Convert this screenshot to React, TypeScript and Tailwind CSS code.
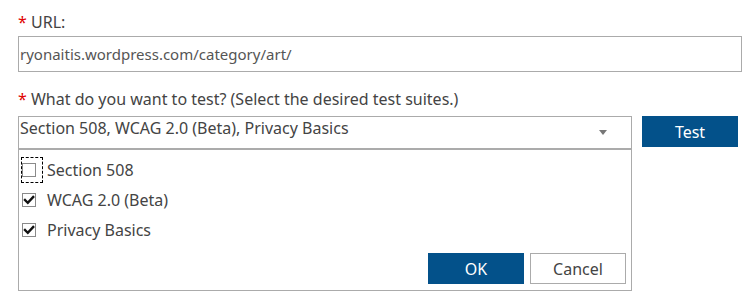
import React from "react";

function Check({ checked }: { checked: boolean }) {
  return (
    <span className="block w-[14px] h-[14px] border border-[#8a8a8a] bg-white relative">
      {checked && (
        <svg viewBox="0 0 14 14" className="absolute left-[-1px] top-[-1px] w-[14px] h-[14px]">
          <path d="M3 7 L5.8 9.8 L11.2 4" fill="none" stroke="#111" strokeWidth="2.4" strokeLinecap="square" />
        </svg>
      )}
    </span>
  );
}

function Row({ label, checked, focused }: { label: string; checked: boolean; focused?: boolean }) {
  return (
    <div className="flex items-center h-[30px]">
      <span
        className={
          "flex items-center w-[22px] h-[26px] border " +
          (focused ? "border-dashed border-black" : "border-transparent")
        }
      >
        <Check checked={checked} />
      </span>
      <span className="ml-[4px] text-[#444]">{label}</span>
    </div>
  );
}

export default function App() {
  return (
    <div
      className="w-[746px] h-[301px] bg-white pl-[18px] text-[16px] leading-[22px] text-[#444]"
      style={{ fontFamily: '"Noto Sans", "Open Sans", sans-serif' }}
    >
      <div className="pt-[11px]">
        <span className="text-[#e00000]">*</span> URL:
      </div>
      <div className="mt-[3px] w-[724px] h-[36px] border border-[#ababab] flex items-center pl-[1px] text-[15px] text-[#555]">
        ryonaitis.wordpress.com/category/art/
      </div>
      <div className="mt-[16px]">
        <span className="text-[#e00000]">*</span> What do you want to test? (Select the desired test suites.)
      </div>
      <div className="mt-[6px] flex items-start">
        <div className="w-[614px]">
          <div className="h-[33px] border border-[#ababab] flex items-start pl-[1px] pt-[1px] leading-[20px] relative">
            <span>Section 508, WCAG 2.0 (Beta), Privacy Basics</span>
            <span className="absolute right-[24px] top-[13px] w-0 h-0 border-l-[4px] border-r-[4px] border-t-[5px] border-l-transparent border-r-transparent border-t-[#777]" />
          </div>
          <div className="h-[142px] border border-[#ababab] flex flex-col pt-[5px] pl-[2px]">
            <Row label="Section 508" checked={false} focused />
            <Row label="WCAG 2.0 (Beta)" checked />
            <Row label="Privacy Basics" checked />
            <div className="mt-auto flex justify-end gap-[6px] pr-[5px] pb-[6px]">
              <button className="w-[96px] h-[31px] bg-[#03518a] text-white">OK</button>
              <button className="w-[96px] h-[31px] border border-[#ababab] bg-white text-[#444]">Cancel</button>
            </div>
          </div>
        </div>
        <button className="ml-[10px] w-[96px] h-[31px] bg-[#03518a] text-white">Test</button>
      </div>
    </div>
  );
}
